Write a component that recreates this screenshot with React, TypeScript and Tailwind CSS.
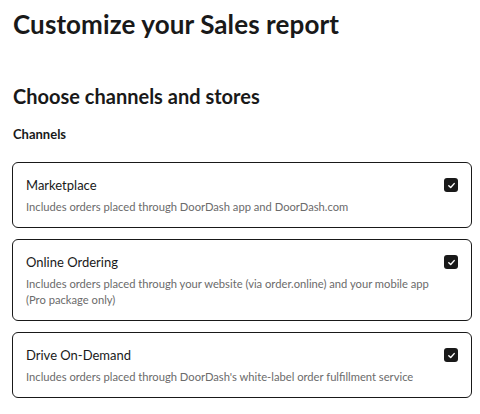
import React, { useState } from 'react';

type Channel = {
  id: string;
  name: string;
  description: string;
};

const channels: Channel[] = [
  {
    id: 'marketplace',
    name: 'Marketplace',
    description: 'Includes orders placed through DoorDash app and DoorDash.com',
  },
  {
    id: 'online-ordering',
    name: 'Online Ordering',
    description:
      'Includes orders placed through your website (via order.online) and your mobile app (Pro package only)',
  },
  {
    id: 'drive',
    name: 'Drive On-Demand',
    description: "Includes orders placed through DoorDash's white-label order fulfillment service",
  },
];

const Checkbox = ({ checked, onToggle }: { checked: boolean; onToggle: () => void }) => (
  <button
    type="button"
    onClick={onToggle}
    className={`flex h-[14px] w-[14px] shrink-0 items-center justify-center rounded-[3px] ${
      checked ? 'bg-[#191919]' : 'border-[1.5px] border-[#191919] bg-white'
    }`}
  >
    {checked && (
      <svg width="9" height="9" viewBox="0 0 10 10" fill="none">
        <path d="M2 5.3 4.1 7.3 8 2.9" stroke="white" strokeWidth="1.6" strokeLinecap="round" strokeLinejoin="round" />
      </svg>
    )}
  </button>
);

const App = () => {
  const [selected, setSelected] = useState<Record<string, boolean>>({
    marketplace: true,
    'online-ordering': true,
    drive: true,
  });

  const toggle = (id: string) => setSelected(s => ({ ...s, [id]: !s[id] }));

  return (
    <div className="min-h-screen w-[480px] bg-white px-[12px] pt-[8px] text-[#191919] font-['Lato',sans-serif]">
      <h1 className="pl-[1px] text-[26px] font-bold leading-[32px] tracking-[0.1px]">Customize your Sales report</h1>

      <h2 className="mt-[44px] pl-[1px] text-[20px] font-bold leading-[24px]">Choose channels and stores</h2>

      <h3 className="mt-[18px] pl-[1px] text-[13px] font-bold leading-[16px]">Channels</h3>

      <div className="mt-[20px] flex w-[460px] flex-col gap-[11px]">
        {channels.map(channel => (
          <div key={channel.id} className="rounded-[6px] border-[1.5px] border-[#191919] px-[13px] pt-[13px] pb-[12px]">
            <div className="flex items-center justify-between">
              <span className="text-[13px] leading-[18px]">{channel.name}</span>
              <Checkbox checked={selected[channel.id]} onToggle={() => toggle(channel.id)} />
            </div>
            <p className="mt-[5px] pr-[20px] text-[11.2px] leading-[16px] text-[#6b6b6b]">{channel.description}</p>
          </div>
        ))}
      </div>
    </div>
  );
};

export default App;
